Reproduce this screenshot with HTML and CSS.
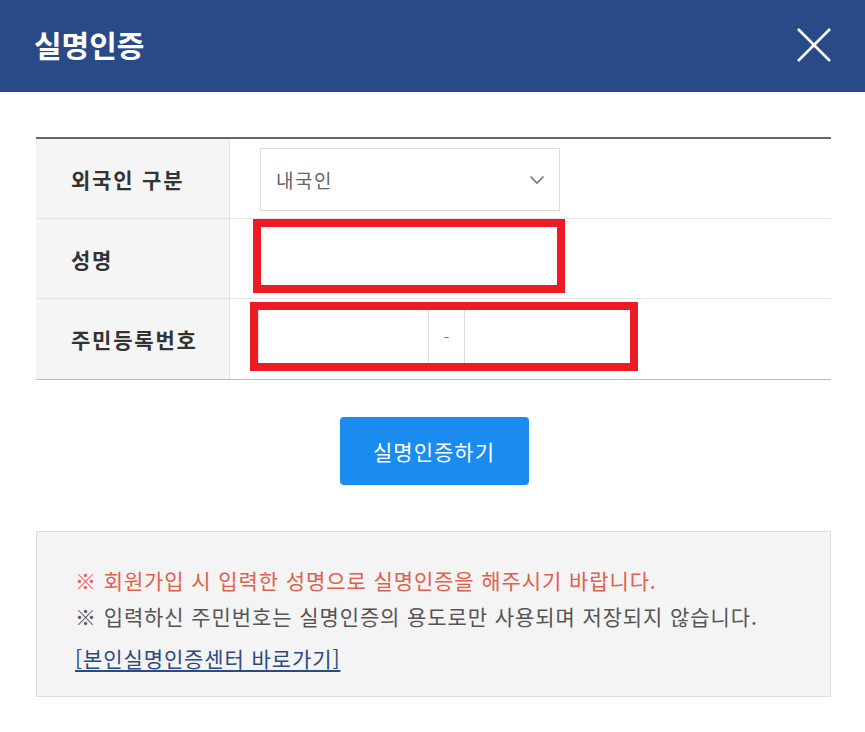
FILE: index.html
```html
<!DOCTYPE html>
<html lang="ko">

<head>
  <meta charset="UTF-8">
  <meta name="viewport" content="width=device-width, initial-scale=1.0">
  <title>실명인증</title>
  <link rel="stylesheet" href="styles.css">
</head>

<body>
  <div class="pop-head">
    <h1 class="pop-title">실명인증</h1>
    <button class="pop-close" type="button" aria-label="닫기">
      <svg width="36" height="36" viewBox="0 0 36 36">
        <path d="M2 2 L34 34 M34 2 L2 34" stroke="#fff" stroke-width="2.6" fill="none" />
      </svg>
    </button>
  </div>

  <div class="pop-body">
    <div class="form-table">
      <div class="form-row">
        <div class="form-th">외국인 구분</div>
        <div class="form-td td-select">
          <div class="select-box">
            <span>내국인</span>
            <svg width="16" height="10" viewBox="0 0 16 10">
              <path d="M1.5 1.5 L8 8 L14.5 1.5" stroke="#777" stroke-width="1.6" fill="none" />
            </svg>
          </div>
        </div>
      </div>

      <div class="form-row">
        <div class="form-th">성명</div>
        <div class="form-td td-name">
          <div class="mark-box mark-name">
            <input class="text-input" type="text">
          </div>
        </div>
      </div>

      <div class="form-row">
        <div class="form-th">주민등록번호</div>
        <div class="form-td td-jumin">
          <div class="mark-box mark-jumin">
            <input class="text-input jumin-first" type="text">
            <span class="jumin-dash">-</span>
            <input class="text-input jumin-last" type="password">
          </div>
        </div>
      </div>
    </div>

    <div class="btn-area">
      <button class="btn-confirm" type="button">실명인증하기</button>
    </div>

    <div class="notice-box">
      <p class="notice-red">※ 회원가입 시 입력한 성명으로 실명인증을 해주시기 바랍니다.</p>
      <p class="notice-gray">※ 입력하신 주민번호는 실명인증의 용도로만 사용되며 저장되지 않습니다.</p>
      <p class="notice-link"><a href="#">[본인실명인증센터 바로가기]</a></p>
    </div>
  </div>
</body>

</html>
```

FILE: styles.css
```css
html,
body {
  margin: 0;
  padding: 0;
  background: #fff;
  color: #333;
  font-family: "Noto Sans CJK KR", "Noto Sans", sans-serif;
}

/* 헤더 */
.pop-head {
  height: 92px;
  background-color: #284a87;
  display: flex;
  align-items: center;
  justify-content: space-between;
  padding: 0 33px 0 34px;
  box-sizing: border-box;
}

.pop-title {
  margin: 0;
  color: #fff;
  font-size: 30px;
  font-weight: 700;
  line-height: 1;
  padding-bottom: 4px;
}

.pop-close {
  border: none;
  background: none;
  padding: 0;
  width: 36px;
  height: 36px;
  margin-bottom: 3px;
  cursor: pointer;
}

.pop-close svg {
  display: block;
}

.pop-body {
  padding: 45px 34px 0 36px;
}

/* 입력 테이블 */
.form-table {
  border-top: 2px solid #666;
  border-bottom: 1px solid #bbb;
}

.form-row {
  display: flex;
  height: 80px;
  border-bottom: 1px solid #e4e4e4;
  box-sizing: border-box;
}

.form-row:last-child {
  border-bottom: none;
}

.form-th {
  width: 194px;
  flex-shrink: 0;
  background-color: #f5f5f5;
  border-right: 1px solid #e4e4e4;
  display: flex;
  align-items: center;
  padding-left: 35px;
  box-sizing: border-box;
  font-size: 21px;
  letter-spacing: 1.8px;
  font-weight: 700;
  color: #333;
}

.form-td {
  flex: 1;
}

.td-select {
  padding: 9px 0 0 30px;
}

.select-box {
  width: 300px;
  height: 63px;
  border: 1px solid #ddd;
  box-sizing: border-box;
  display: flex;
  align-items: center;
  justify-content: space-between;
  padding: 0 14px 0 15px;
  font-size: 19px;
  letter-spacing: 1.5px;
  color: #666;
  background: #fff;
}

.td-name {
  padding: 0 0 0 23px;
}

.td-jumin {
  padding: 3px 0 0 20px;
}

/* 빨간 표시 박스 */
.mark-box {
  border: 8px solid #ed1c24;
  box-sizing: border-box;
  display: flex;
}

.mark-name {
  width: 312px;
  height: 74px;
}

.mark-jumin {
  width: 388px;
  height: 69px;
}

.text-input {
  border: none;
  outline: none;
  margin: 0;
  padding: 0 12px;
  font-size: 18px;
  font-family: inherit;
  background: #fff;
  flex: 1;
  min-width: 0;
}

.jumin-first {
  flex: 0 0 170px;
  border-left: 1px solid #ddd;
  box-sizing: border-box;
}

.jumin-dash {
  width: 37px;
  flex-shrink: 0;
  border-left: 1px solid #ddd;
  border-right: 1px solid #ddd;
  box-sizing: border-box;
  display: flex;
  align-items: center;
  justify-content: center;
  color: #777;
  font-size: 16px;
  background: #fff;
}

/* 버튼 */
.btn-area {
  display: flex;
  justify-content: center;
  margin-top: 37px;
  padding-left: 1px;
}

.btn-confirm {
  width: 189px;
  height: 68px;
  border: none;
  border-radius: 4px;
  background-color: #1a8cf0;
  color: #fff;
  font-family: inherit;
  font-size: 21px;
  letter-spacing: 1px;
  cursor: pointer;
}

/* 안내 */
.notice-box {
  margin-top: 46px;
  background-color: #f4f4f4;
  border: 1px solid #ddd;
  padding: 30px 20px 20px 38px;
  font-size: 21px;
  letter-spacing: 0.9px;
  line-height: 36px;
}

.notice-box p {
  margin: 0;
}

.notice-red {
  color: #e0604c;
}

.notice-gray {
  color: #555;
}

.notice-link {
  margin-top: 6px !important;
}

.notice-link a {
  color: #2b4a82;
  text-decoration: underline;
  text-underline-offset: 3px;
}
```
